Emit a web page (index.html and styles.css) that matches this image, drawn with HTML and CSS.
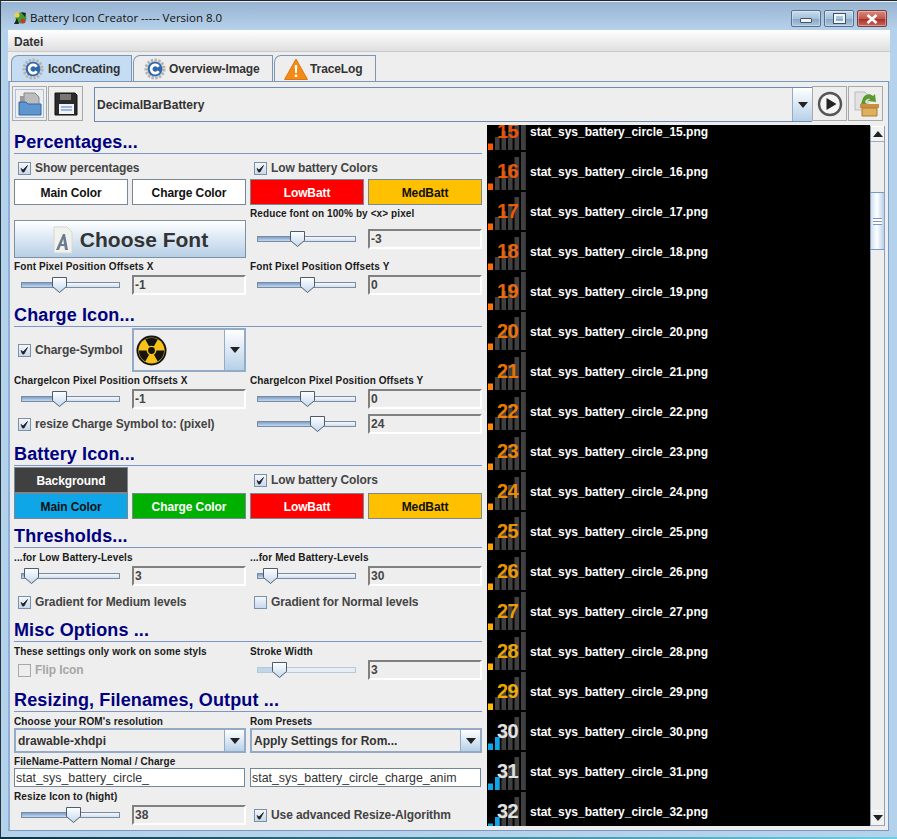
FILE: index.html
```html
<!DOCTYPE html>
<html lang="en">
<head>
  <meta charset="UTF-8" />
  <title>Battery Icon Creator</title>
  <link rel="stylesheet" href="styles.css">
</head>
<body>
  <!-- shared icon shapes -->
  <svg class="defs" width="0" height="0">
    <defs>
      <linearGradient id="thumbFill" x1="0" y1="0" x2="0" y2="1">
        <stop offset="0" stop-color="#ffffff"/><stop offset="1" stop-color="#c3d8ee"/>
      </linearGradient>
      <symbol id="thumb" viewBox="0 0 15 16"><path d="M.5.5h14v9l-7 6-7-6z" fill="url(#thumbFill)" stroke="#4d5c6c"/></symbol>
      <symbol id="tick" viewBox="0 0 13 13"><path d="M3 6.500l2 1.500 4.500-4.500-3.500 6.500h-1.500z" fill="#222" stroke="#222" stroke-width=".8"/></symbol>
      <symbol id="gear" viewBox="0 0 24 24">
        <circle cx="12" cy="12" r="9.500" fill="#d8d8d8" stroke="#b4b4b4" stroke-width="4" stroke-dasharray="2.500 1.500"/>
        <circle cx="12" cy="12" r="8" fill="#2f68ad"/>
        <path d="M16 9.500a4.500 4.500 0 1 0 0 5" fill="none" stroke="#fff" stroke-width="3"/>
      </symbol>
      <symbol id="bars" viewBox="0 0 38 38">
        <rect x="0" y="31.500" width="5" height="6.500" fill="currentColor"/>
        <rect x="7" y="25" width="4.600" height="13" fill="#404040"/>
        <rect x="13.500" y="19" width="4.600" height="19" fill="#404040"/>
        <rect x="20" y="13" width="4.600" height="25" fill="#404040"/>
        <rect x="26.500" y="5" width="4.600" height="33" fill="#404040"/>
        <rect x="33" y="0" width="4.800" height="38" fill="#404040"/>
      </symbol>
      <symbol id="barsBlue" viewBox="0 0 38 38">
        <use href="#bars"/>
        <rect x="7" y="25" width="4.600" height="13" fill="currentColor"/>
      </symbol>
    </defs>
  </svg>

  <div class="window">
    <div class="titlebar">
      <svg class="app-icon" width="16" height="16" viewBox="0 0 16 16">
        <circle cx="9" cy="8" r="5.500" fill="#3f9a3a"/>
        <circle cx="5" cy="5" r="2.500" fill="#f0d040"/>
        <path d="M2 14l3-6 2 6zM9 2l5 1-1 4z" fill="#222"/>
        <circle cx="11" cy="11" r="2.500" fill="#c23b2e"/>
      </svg>
      <span class="title-text">Battery Icon Creator ----- Version 8.0</span>
      <div class="win-buttons">
        <div class="win-btn"><span class="glyph-min"></span></div>
        <div class="win-btn"><span class="glyph-max"></span></div>
        <div class="win-btn win-close">
          <svg width="14" height="10" viewBox="0 0 14 10"><path d="M2.500 1l9 8M11.500 1l-9 8" stroke="#fff" stroke-width="2.600"/></svg>
        </div>
      </div>
    </div>

    <div class="menubar"><span class="menu-item">Datei</span></div>

    <div class="tabs">
      <div class="tab tab-active">
        <svg width="22" height="22"><use href="#gear"/></svg>
        <span>IconCreating</span>
      </div>
      <div class="tab tab-second">
        <svg width="22" height="22"><use href="#gear"/></svg>
        <span>Overview-Image</span>
      </div>
      <div class="tab tab-third">
        <svg width="24" height="22" viewBox="0 0 24 22">
          <path d="M12 1L23.500 21.500H.5z" fill="#f18a16" stroke="#e2780c"/>
          <path d="M10.700 7h2.600l-.5 8h-1.600zM10.800 16.500h2.400v2.500h-2.400z" fill="#fff"/>
        </svg>
        <span>TraceLog</span>
      </div>
    </div>

    <div class="panel">
      <div class="toolbar">
        <div class="tool-btn tool-focus">
          <svg width="26" height="26" viewBox="0 0 26 26">
            <path d="M7 2h11l4 4v8H7z" fill="#bdbdbd" stroke="#8a8a8a"/>
            <path d="M3 5h4v8H3z" fill="#9a9a9a"/>
            <path d="M2 11h7l2 2h13v11H2z" fill="#5f95cf" stroke="#35669f"/>
          </svg>
        </div>
        <div class="tool-btn">
          <svg width="26" height="26" viewBox="0 0 26 26">
            <path d="M2 2h20l2 2v20H2z" fill="#2b2b2b" stroke="#111"/>
            <path d="M7 3h11v6H7z" fill="#777"/>
            <path d="M6 13h15v10H6z" fill="#f0f2f6"/>
            <path d="M8 16h11M8 19h11" stroke="#7fa4d4" stroke-width="1.500"/>
          </svg>
        </div>
        <div class="combo combo-main">
          <span class="combo-value">DecimalBarBattery</span>
          <span class="combo-arrow"></span>
        </div>
        <div class="tool-btn">
          <svg width="26" height="26" viewBox="0 0 26 26">
            <circle cx="13" cy="13" r="11" fill="#f4f4f4" stroke="#555" stroke-width="2.400"/>
            <path d="M9.500 7l10 6-10 6z" fill="#222"/>
          </svg>
        </div>
        <div class="tool-btn">
          <svg width="28" height="28" viewBox="0 0 28 28">
            <path d="M3 2h10l3 3v15H3z" fill="#e2e2e2" stroke="#bbb"/>
            <path d="M8 14h19v4H8z" fill="#c9913f"/>
            <path d="M10 18h15v8H10z" fill="#dfae5e" stroke="#a97a30"/>
            <path d="M11 8c2-4 7-5 10-2l2-2 1 8-8-1 2-2c-2-1-4 0-5 3l2 2h-6z" fill="#5b9b2d"/>
          </svg>
        </div>
      </div>

      <div class="split">
        <div class="settings">

          <h2 class="section-title">Percentages...</h2>
          <div class="row row-check">
            <label class="check-label span-2"><span class="box"><svg width="13" height="13"><use href="#tick"/></svg></span>Show percentages</label>
            <label class="check-label span-2"><span class="box"><svg width="13" height="13"><use href="#tick"/></svg></span>Low battery Colors</label>
          </div>
          <div class="row row-colors">
            <div class="color-btn c-white">Main Color</div>
            <div class="color-btn c-white">Charge Color</div>
            <div class="color-btn c-red">LowBatt</div>
            <div class="color-btn c-amber">MedBatt</div>
          </div>
          <div class="row row-label row-label-tight">
            <span class="span-2"></span>
            <span class="small-label span-2">Reduce font on 100% by &lt;x&gt; pixel</span>
          </div>
          <div class="row row-font">
            <div class="font-btn span-2">
              <svg width="22" height="28" viewBox="0 0 22 28">
                <path d="M2 1h13l5 5v21H2z" fill="#f1f1ee" stroke="#d8d8d0"/>
                <path d="M4 24l7-16h2l3 16h-3l-.6-4H8.500L7 24zM9.500 18h2.500l-.7-5z" fill="#6c7a92"/>
              </svg>
              <span>Choose Font</span>
            </div>
            <div class="slider" style="--pos:40px"><div class="track"><div class="fill"></div></div><svg class="thumb"><use href="#thumb"/></svg></div>
            <input class="num" value="-3">
          </div>
          <div class="row row-label">
            <span class="small-label span-2">Font Pixel Position Offsets X</span>
            <span class="small-label span-2">Font Pixel Position Offsets Y</span>
          </div>
          <div class="row row-slider">
            <div class="slider" style="--pos:38px"><div class="track"><div class="fill"></div></div><svg class="thumb"><use href="#thumb"/></svg></div>
            <input class="num" value="-1">
            <div class="slider" style="--pos:50px"><div class="track"><div class="fill"></div></div><svg class="thumb"><use href="#thumb"/></svg></div>
            <input class="num" value="0">
          </div>

          <h2 class="section-title gap-6">Charge Icon...</h2>
          <div class="row row-symbol">
            <label class="check-label"><span class="box"><svg width="13" height="13"><use href="#tick"/></svg></span>Charge-Symbol</label>
            <div class="combo">
              <span class="combo-value">
                <svg class="radiation" width="31" height="31" viewBox="0 0 32 32">
                  <circle cx="16" cy="16" r="15.500" fill="#141414"/>
                  <circle cx="16" cy="16" r="13.500" fill="#f7c316"/>
                  <path d="M16 16L9.500 4.700A13 13 0 0 1 22.500 4.700zM16 16L29 16A13 13 0 0 1 22.500 27.300zM16 16L9.500 27.300A13 13 0 0 1 3 16z" fill="#141414"/>
                  <circle cx="16" cy="16" r="5" fill="#f7c316"/>
                  <circle cx="16" cy="16" r="3.500" fill="#141414"/>
                </svg>
              </span>
              <span class="combo-arrow"></span>
            </div>
          </div>
          <div class="row row-label">
            <span class="small-label span-2">ChargeIcon Pixel Position Offsets X</span>
            <span class="small-label span-2">ChargeIcon Pixel Position Offsets Y</span>
          </div>
          <div class="row row-slider">
            <div class="slider" style="--pos:38px"><div class="track"><div class="fill"></div></div><svg class="thumb"><use href="#thumb"/></svg></div>
            <input class="num" value="-1">
            <div class="slider" style="--pos:50px"><div class="track"><div class="fill"></div></div><svg class="thumb"><use href="#thumb"/></svg></div>
            <input class="num" value="0">
          </div>
          <div class="row row-slider gap-5">
            <label class="check-label span-2"><span class="box"><svg width="13" height="13"><use href="#tick"/></svg></span>resize Charge Symbol to: (pixel)</label>
            <div class="slider" style="--pos:60px"><div class="track"><div class="fill"></div></div><svg class="thumb"><use href="#thumb"/></svg></div>
            <input class="num" value="24">
          </div>

          <h2 class="section-title gap-6">Battery Icon...</h2>
          <div class="row row-colors">
            <div class="color-btn c-dark">Background</div>
            <span></span>
            <label class="check-label span-2"><span class="box"><svg width="13" height="13"><use href="#tick"/></svg></span>Low battery Colors</label>
          </div>
          <div class="row row-colors no-gap">
            <div class="color-btn c-blue">Main Color</div>
            <div class="color-btn c-green">Charge Color</div>
            <div class="color-btn c-red">LowBatt</div>
            <div class="color-btn c-amber">MedBatt</div>
          </div>

          <h2 class="section-title gap-3">Thresholds...</h2>
          <div class="row row-label gap-1">
            <span class="small-label span-2">...for Low Battery-Levels</span>
            <span class="small-label span-2">...for Med Battery-Levels</span>
          </div>
          <div class="row row-slider">
            <div class="slider" style="--pos:10px"><div class="track"><div class="fill"></div></div><svg class="thumb"><use href="#thumb"/></svg></div>
            <input class="num" value="3">
            <div class="slider" style="--pos:13px"><div class="track"><div class="fill"></div></div><svg class="thumb"><use href="#thumb"/></svg></div>
            <input class="num" value="30">
          </div>
          <div class="row row-slider gap-6">
            <label class="check-label span-2"><span class="box"><svg width="13" height="13"><use href="#tick"/></svg></span>Gradient for Medium levels</label>
            <label class="check-label span-2"><span class="box"></span>Gradient for Normal levels</label>
          </div>

          <h2 class="section-title gap-4">Misc Options ...</h2>
          <div class="row row-label gap-1">
            <span class="small-label span-2">These settings only work on some styls</span>
            <span class="small-label span-2">Stroke Width</span>
          </div>
          <div class="row row-slider">
            <label class="check-label check-off span-2"><span class="box"></span>Flip Icon</label>
            <div class="slider slider-off" style="--pos:22px"><div class="track"><div class="fill"></div></div><svg class="thumb"><use href="#thumb"/></svg></div>
            <input class="num" value="3">
          </div>

          <h2 class="section-title gap-6">Resizing, Filenames, Output ...</h2>
          <div class="row row-label row-label-tight gap-1">
            <span class="small-label span-2">Choose your ROM's resolution</span>
            <span class="small-label span-2">Rom Presets</span>
          </div>
          <div class="row row-combos">
            <div class="combo span-2"><span class="combo-value">drawable-xhdpi</span><span class="combo-arrow"></span></div>
            <div class="combo span-2"><span class="combo-value">Apply Settings for Rom...</span><span class="combo-arrow"></span></div>
          </div>
          <div class="row row-label row-label-tight">
            <span class="small-label span-2">FileName-Pattern Nomal / Charge</span>
          </div>
          <div class="row row-names">
            <input class="name-field span-2" value="stat_sys_battery_circle_">
            <input class="name-field span-2" value="stat_sys_battery_circle_charge_anim">
          </div>
          <div class="row row-label gap-1">
            <span class="small-label span-2">Resize Icon to (hight)</span>
          </div>
          <div class="row row-slider">
            <div class="slider" style="--pos:52px"><div class="track"><div class="fill"></div></div><svg class="thumb"><use href="#thumb"/></svg></div>
            <input class="num" value="38">
            <label class="check-label span-2"><span class="box"><svg width="13" height="13"><use href="#tick"/></svg></span>Use advanced Resize-Algorithm</label>
          </div>
        </div>

        <div class="preview">
          <div class="preview-list">
            <div class="preview-inner">
              <div class="icon-row" style="color:#ff5500"><svg width="38" height="38"><use href="#bars"/></svg><b class="level">15</b><span>stat_sys_battery_circle_15.png</span></div>
              <div class="icon-row" style="color:#ff5c00"><svg width="38" height="38"><use href="#bars"/></svg><b class="level">16</b><span>stat_sys_battery_circle_16.png</span></div>
              <div class="icon-row" style="color:#ff6300"><svg width="38" height="38"><use href="#bars"/></svg><b class="level">17</b><span>stat_sys_battery_circle_17.png</span></div>
              <div class="icon-row" style="color:#ff6a00"><svg width="38" height="38"><use href="#bars"/></svg><b class="level">18</b><span>stat_sys_battery_circle_18.png</span></div>
              <div class="icon-row" style="color:#ff7100"><svg width="38" height="38"><use href="#bars"/></svg><b class="level">19</b><span>stat_sys_battery_circle_19.png</span></div>
              <div class="icon-row" style="color:#ff7900"><svg width="38" height="38"><use href="#bars"/></svg><b class="level">20</b><span>stat_sys_battery_circle_20.png</span></div>
              <div class="icon-row" style="color:#ff8000"><svg width="38" height="38"><use href="#bars"/></svg><b class="level">21</b><span>stat_sys_battery_circle_21.png</span></div>
              <div class="icon-row" style="color:#ff8700"><svg width="38" height="38"><use href="#bars"/></svg><b class="level">22</b><span>stat_sys_battery_circle_22.png</span></div>
              <div class="icon-row" style="color:#ff8e00"><svg width="38" height="38"><use href="#bars"/></svg><b class="level">23</b><span>stat_sys_battery_circle_23.png</span></div>
              <div class="icon-row" style="color:#ff9500"><svg width="38" height="38"><use href="#bars"/></svg><b class="level">24</b><span>stat_sys_battery_circle_24.png</span></div>
              <div class="icon-row" style="color:#ff9c00"><svg width="38" height="38"><use href="#bars"/></svg><b class="level">25</b><span>stat_sys_battery_circle_25.png</span></div>
              <div class="icon-row" style="color:#ffa300"><svg width="38" height="38"><use href="#bars"/></svg><b class="level">26</b><span>stat_sys_battery_circle_26.png</span></div>
              <div class="icon-row" style="color:#ffaa00"><svg width="38" height="38"><use href="#bars"/></svg><b class="level">27</b><span>stat_sys_battery_circle_27.png</span></div>
              <div class="icon-row" style="color:#ffb200"><svg width="38" height="38"><use href="#bars"/></svg><b class="level">28</b><span>stat_sys_battery_circle_28.png</span></div>
              <div class="icon-row" style="color:#ffb900"><svg width="38" height="38"><use href="#bars"/></svg><b class="level">29</b><span>stat_sys_battery_circle_29.png</span></div>
              <div class="icon-row icon-full"><svg width="38" height="38"><use href="#barsBlue"/></svg><b class="level">30</b><span>stat_sys_battery_circle_30.png</span></div>
              <div class="icon-row icon-full"><svg width="38" height="38"><use href="#barsBlue"/></svg><b class="level">31</b><span>stat_sys_battery_circle_31.png</span></div>
              <div class="icon-row icon-full"><svg width="38" height="38"><use href="#barsBlue"/></svg><b class="level">32</b><span>stat_sys_battery_circle_32.png</span></div>
            </div>
          </div>
          <div class="scrollbar">
            <div class="scroll-btn"><span class="arrow-up"></span></div>
            <div class="scroll-track scroll-track-top"></div>
            <div class="scroll-thumb"><span class="grip"></span></div>
            <div class="scroll-track"></div>
            <div class="scroll-btn"><span class="arrow-down"></span></div>
          </div>
        </div>
      </div>
    </div>
  </div>
</body>
</html>
```

FILE: styles.css
```css
html, body {
  margin: 0;
  padding: 0;
  height: 100%;
}

body {
  width: 897px;
  height: 839px;
  overflow: hidden;
  background: linear-gradient(90deg, #0c3140, #66d4e6);
  font-family: 'Liberation Sans', Arial, sans-serif;
  font-size: 12px;
  font-weight: bold;
  color: #333;
}

.defs {
  display: block;
  height: 0;
}

.window {
  box-sizing: border-box;
  width: 897px;
  height: 837px;
  display: flex;
  flex-direction: column;
  background-color: #b5d2ec;
  border-top: 1px solid #222;
  border-left: 1px solid #24323c;
}

/* title bar */
.titlebar {
  box-sizing: border-box;
  height: 29px;
  flex: none;
  display: flex;
  align-items: center;
  padding: 4px 10px 0 11px;
  background: linear-gradient(#95b2d0, #b6d1ea);
  box-shadow: inset 0 1px 0 #e8eef4;
}

.app-icon {
  margin-right: 2px;
}

.title-text {
  font-family: 'Open Sans', sans-serif;
  font-weight: 400;
  font-size: 11.5px;
  color: #111;
}

.win-buttons {
  margin-left: auto;
  display: flex;
  gap: 3px;
  align-self: flex-start;
  margin-top: 5px;
}

.win-btn {
  box-sizing: border-box;
  width: 30px;
  height: 17px;
  display: flex;
  align-items: center;
  justify-content: center;
  border: 1px solid #57708c;
  border-radius: 2px;
  background: linear-gradient(#c9dced, #a4c0dc 50%, #8aa9c8 55%, #a9c5e0);
  box-shadow: inset 0 0 0 1px rgba(255,255,255,0.35);
}

.win-close {
  background: linear-gradient(#d98a80, #c2574d 50%, #a93028 55%, #c8655a);
  border-color: #7c3a38;
}

.glyph-min {
  width: 10px;
  height: 3px;
  margin-top: 4px;
  background: #f2f5f8;
  border: 1px solid #3f5266;
  border-radius: 1px;
}

.glyph-max {
  box-sizing: border-box;
  width: 11px;
  height: 9px;
  border: 2px solid #f2f5f8;
  outline: 1px solid #3f5266;
}

/* menu */
.menubar {
  box-sizing: border-box;
  height: 22px;
  flex: none;
  margin: 0 7px;
  padding: 5px 6px 0;
  background: linear-gradient(#ffffff, #dfdfdf);
  border-bottom: 1px solid #c9c9c9;
}

/* tabs */
.tabs {
  box-sizing: border-box;
  height: 29px;
  flex: none;
  margin: 0 7px;
  padding: 3px 0 0 3px;
  display: flex;
  background-color: #eeeeee;
}

.tab {
  box-sizing: border-box;
  height: 26px;
  display: flex;
  align-items: center;
  gap: 4px;
  padding: 0 0 0 10px;
  border: 1px solid #7c95b5;
  border-bottom: none;
  border-top-left-radius: 7px;
  margin-right: 1px;
  color: #333;
  letter-spacing: -0.100px;
}

.tab-active {
  width: 121px;
  background-color: #c5dcf2;
}

.tab-second {
  width: 140px;
  gap: 3px;
}

.tab-third {
  width: 102px;
  padding-left: 9px;
  gap: 2px;
}

/* main panel */
.panel {
  box-sizing: border-box;
  height: 750px;
  flex: none;
  margin: 0 7px;
  width: 881px;
  display: flex;
  flex-direction: column;
  background-color: #eeeeee;
  border: 1px solid #7b98bf;
  border-left: 2px solid #8eb0d6;
}

.toolbar {
  box-sizing: border-box;
  height: 42px;
  flex: none;
  display: flex;
  align-items: flex-start;
  padding: 4px 4px 0 2px;
}

.tool-btn {
  box-sizing: border-box;
  width: 35px;
  height: 35px;
  margin-right: 1px;
  display: flex;
  align-items: center;
  justify-content: center;
  border: 1px solid #a9a9a9;
  background-color: #eeeeee;
}

.tool-focus {
  box-shadow: inset 0 0 0 2px #eee, inset 0 0 0 3px #a7c3df;
}

.combo {
  box-sizing: border-box;
  display: flex;
  align-items: stretch;
  border: 2px solid #94abc6;
  background-color: #eeeeee;
}

.combo-main {
  width: 718px;
  height: 35px;
  margin: 1px 0 0 10px;
  border-width: 1px 0 1px 1px;
  border-style: solid;
  border-color: #6d8bb0;
}

.combo-value {
  flex: 1;
  display: flex;
  align-items: center;
  padding-left: 2px;
  color: #333;
}

.combo-arrow {
  width: 19px;
  flex: none;
  display: flex;
  align-items: center;
  justify-content: center;
  background: linear-gradient(#ffffff, #b7d0e8);
  border-left: 1px solid #94abc6;
}

.combo-arrow::after {
  content: "";
  border-top: 6px solid #222;
  border-left: 5px solid transparent;
  border-right: 5px solid transparent;
}

.split {
  flex: 1;
  min-height: 0;
  display: flex;
}

/* left settings column */
.settings {
  box-sizing: border-box;
  width: 476px;
  flex: none;
  padding: 4px 0 0 4px;
  overflow: hidden;
}

.section-title {
  box-sizing: border-box;
  width: 468px;
  height: 26px;
  margin: 0;
  padding-top: 4px;
  font-size: 18px;
  line-height: 21px;
  font-weight: bold;
  letter-spacing: 0.130px;
  color: #000080;
  border-bottom: 1px solid #7d97c4;
}

.gap-1 { margin-top: 1px; }
.gap-3 { margin-top: 3px; }
.gap-4 { margin-top: 4px; }
.gap-5 { margin-top: 5px; }
.gap-6 { margin-top: 6px; }

.row {
  display: grid;
  grid-template-columns: repeat(4, 114px);
  column-gap: 4px;
  width: 468px;
}

.span-2 {
  grid-column: span 2;
}

.row-check { height: 20px; margin-top: 4px; }
.row-colors { height: 26px; margin-top: 1px; }
.row-colors.no-gap { margin-top: 0; }
.row-label { height: 17px; align-items: center; }
.row-label-tight { box-sizing: border-box; height: 15px; padding-top: 2px; }
.row-font { height: 38px; align-items: center; }
.row-slider { height: 20px; align-items: center; }
.row-symbol { height: 44px; margin-top: 1px; align-items: stretch; }
.row-combos { height: 25px; }
.row-names { height: 19px; }

.small-label {
  font-size: 10px;
  letter-spacing: 0.100px;
  color: #1a1a1a;
  white-space: nowrap;
}

.check-label {
  display: flex;
  align-items: center;
  gap: 4px;
  padding-left: 4px;
  white-space: nowrap;
  color: #444;
  letter-spacing: -0.100px;
}

.check-off {
  color: #a6a6a6;
}

.box {
  box-sizing: border-box;
  width: 13px;
  height: 13px;
  flex: none;
  border: 1px solid #7b8fa5;
  background: linear-gradient(#f4f7fb, #c6d9ec);
}

.box svg {
  display: block;
  margin: -1px;
}

.check-off .box {
  background: #eeeeee;
  border-color: #a8a8a8;
}

.color-btn {
  box-sizing: border-box;
  display: flex;
  align-items: center;
  justify-content: center;
  padding-top: 1px;
  border: 1px solid #7a8794;
  color: #111;
  letter-spacing: -0.100px;
}

.c-white { background-color: #ffffff; }
.c-red { background-color: #ff0000; color: #fff; }
.c-amber { background-color: #ffc000; }
.c-dark { background-color: #404040; color: #fff; }
.c-blue { background-color: #0ea6e6; }
.c-green { background-color: #00b000; color: #fff; }

.font-btn {
  box-sizing: border-box;
  height: 38px;
  display: flex;
  align-items: center;
  justify-content: center;
  gap: 6px;
  padding-top: 1px;
  border: 1px solid #7b8fa5;
  background: linear-gradient(#ffffff, #b7cfe7);
  font-size: 21px;
  color: #333;
}

.slider {
  position: relative;
  height: 20px;
}

.track {
  box-sizing: border-box;
  position: absolute;
  left: 7px;
  top: 7px;
  width: 99px;
  height: 6px;
  border: 1px solid #7a8ca1;
  background: linear-gradient(#f4f7fb, #d2e0ee);
}

.fill {
  height: 100%;
  width: calc(var(--pos) + 1px);
  background: linear-gradient(#7b9fcc, #c6d9ee);
}

.thumb {
  position: absolute;
  left: var(--pos);
  top: 2px;
  width: 15px;
  height: 16px;
}

.slider-off .track {
  border-color: #b8c8d8;
  background: #e6edf4;
}

.slider-off .fill {
  background: #c0d6ea;
}

.num {
  box-sizing: border-box;
  width: 114px;
  height: 20px;
  margin: 0;
  padding: 0 0 0 1px;
  border-style: solid;
  border-width: 2px;
  border-color: #808080 #ffffff #ffffff #808080;
  background-color: #eeeeee;
  font: inherit;
  color: #444;
}

.name-field {
  box-sizing: border-box;
  width: 231px;
  height: 19px;
  margin: 0;
  padding: 0 1px 0 1px;
  border: 1px solid #71879c;
  background-color: #ffffff;
  font: inherit;
  font-weight: 400;
  font-size: 12.400px;
  color: #333;
}

/* right preview list */
.preview {
  width: 398px;
  height: 702px;
  flex: none;
  margin-left: 1px;
  display: flex;
}

.preview-list {
  width: 383px;
  height: 701px;
  margin-top: 1px;
  overflow: hidden;
  background-color: #000000;
}

.preview-inner {
  margin-top: -13px;
}

.icon-row {
  position: relative;
  height: 40px;
  display: flex;
  align-items: center;
  gap: 4px;
  padding-left: 1px;
  color: #fff;
}

.icon-row svg {
  align-self: flex-start;
  flex: none;
}

.icon-row span {
  color: #fff;
}

.icon-full {
  color: #0fa6e8;
}

.level {
  position: absolute;
  left: 10px;
  top: 8px;
  font-size: 20px;
  line-height: 23px;
  letter-spacing: -0.500px;
  color: inherit;
  opacity: 0.9;
}

.icon-full .level {
  color: #e2e2e2;
  opacity: 1;
}

.scrollbar {
  box-sizing: border-box;
  width: 15px;
  height: 700px;
  margin-top: 2px;
  display: flex;
  flex-direction: column;
  border-right: 1px solid #88a0b8;
  border-left: 1px solid #88a0b8;
}

.scroll-btn {
  box-sizing: border-box;
  height: 16px;
  flex: none;
  display: flex;
  align-items: center;
  justify-content: center;
  background-color: #f2f2f2;
  border-top: 1px solid #fff;
  border-bottom: 1px solid #9aaabc;
}

.arrow-up {
  border-bottom: 6px solid #222;
  border-left: 5px solid transparent;
  border-right: 5px solid transparent;
}

.arrow-down {
  border-top: 6px solid #222;
  border-left: 5px solid transparent;
  border-right: 5px solid transparent;
}

.scroll-track {
  flex: 1;
  background-color: #eeeeee;
}

.scroll-track-top {
  flex: none;
  height: 50px;
}

.scroll-thumb {
  box-sizing: border-box;
  height: 58px;
  flex: none;
  display: flex;
  align-items: center;
  justify-content: center;
  border-top: 1px solid #7d97c4;
  border-bottom: 1px solid #7d97c4;
  background: linear-gradient(90deg, #cfe0f1, #ffffff 45%, #b9d1e9);
}

.grip {
  width: 9px;
  height: 5px;
  border-top: 1px solid #7d97c4;
  border-bottom: 1px solid #7d97c4;
  background: linear-gradient(#fff 40%, #7d97c4 40%, #7d97c4 60%, #fff 60%);
}
```
